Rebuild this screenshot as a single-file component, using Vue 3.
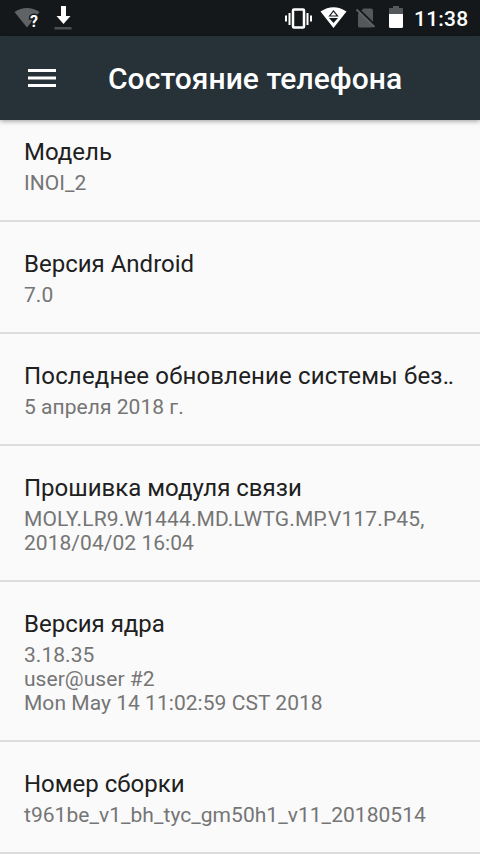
<script setup>
const items = [
  { title: 'Модель', lines: [['INOI_2']] },
  { title: 'Версия Android', lines: [['7.0']] },
  { title: 'Последнее обновление системы без', dots: '..', lines: [['5 апреля 2018 г.']] },
  { title: 'Прошивка модуля связи', lines: [['MOLY.LR9.W1444.MD.LWTG.M', 'P', '.V117.P45,'], ['2018/04/02 16:04']] },
  { title: 'Версия ядра', lines: [['3.18.35'], ['user@user #2'], ['Mon May 14 11:02:59 CST 2018']] },
  { title: 'Номер сборки', lines: [['t961be_v1_bh_tyc_gm50h1_v11_20180514']] },
]
</script>

<template>
  <div class="screen">
    <header class="status">
      <svg class="left" width="80" height="36" viewBox="0 0 80 36">
        <path d="M14.500 12Q27 4 39.500 12L27 27.500Z" fill="#606365" />
        <text x="30" y="27" class="q">?</text>
        <path d="M61 6h5v10h4.500l-7 8-7-8H61z" fill="#fff" />
        <path d="M54.500 27h17v2.500h-17z" fill="#4b4f51" />
      </svg>
      <svg class="right" width="130" height="36" viewBox="280 0 130 36">
        <g fill="none" stroke="#fff" stroke-width="2">
          <rect x="293" y="9.500" width="11" height="18" rx="1" stroke-width="2.500" />
          <path d="M286 15.500v6M289.500 13v12M307.500 13v12M311 15.500v6" />
        </g>
        <path d="M320.500 11.500Q333.500 3 346.500 11.500L333.500 28Z" fill="#fff" />
        <path d="M329.500 16l4-5 4 5z" fill="#fff" stroke="#14181a" stroke-width="1.200" />
        <path d="M329 18h9l-4.500 5z" fill="#14181a" />
        <path d="M363.500 8.500H371q2 0 2 2V26q0 1.500-1.500 1.500h-12q-1.500 0-1.500-1.500V14z" fill="#54585a" />
        <path d="M358 9l18 17.500" stroke="#14181a" stroke-width="2.500" />
        <path d="M356.500 9.500l18 17.500" stroke="#606365" stroke-width="1.800" />
        <path d="M389 14V9q0-1 1-1h3V6h6v2h3q1 0 1 1v5z" fill="#54585a" />
        <path d="M389 14h14v12.500q0 1.500-1.500 1.500h-11q-1.500 0-1.500-1.500z" fill="#fff" />
      </svg>
      <span class="time">11:38</span>
    </header>
    <div class="toolbar">
      <svg width="28" height="20" viewBox="0 0 28 20"><path d="M0 2.500h28M0 10h28M0 17.500h28" stroke="#fff" stroke-width="3" /></svg>
      <h1>Состояние телефона</h1>
    </div>
    <main>
      <section v-for="item in items" :key="item.title">
        <h2 :class="{ wide: item.dots }">{{ item.title }}<span v-if="item.dots" class="dots">{{ item.dots }}</span></h2>
        <p v-for="(line, i) in item.lines" :key="i" :class="{ version: line.length > 1 }"><span v-for="part in line" :key="part" :class="{ kern: part === 'P' }">{{ part }}</span></p>
      </section>
    </main>
  </div>
</template>

<style>
body { margin: 0; }
</style>
<style scoped>
.screen { width: 480px; height: 854px; overflow: hidden; background: #fafafa; font-family: Roboto, sans-serif; display: flex; flex-direction: column; }
.status { height: 36px; flex: none; background: #14181a; display: flex; justify-content: space-between; }
.right { margin-left: auto; }
.q { font-size: 16px; font-weight: 700; fill: #fff; stroke: #14181a; stroke-width: 3px; paint-order: stroke; }
.time { color: #fff; font-size: 21px; font-weight: 500; line-height: 38px; width: 70px; padding-left: 4px; box-sizing: border-box; white-space: nowrap; letter-spacing: 0.2px; }
.toolbar { height: 84px; flex: none; background: #263238; display: flex; align-items: center; padding-left: 28px; box-sizing: border-box; box-shadow: 0 1px 5px #0006; position: relative; }
h1 { margin: 0 0 0 52px; font-size: 30px; font-weight: 500; color: #fff; white-space: nowrap; letter-spacing: 0.04px; }
section { padding: 26px 24px 25px; border-bottom: 2px solid #dcdcdc; }
section:first-child { padding-top: 16px; }
h2 { margin: 0 0 3px; font-size: 24px; line-height: 32px; font-weight: 400; color: #202020; white-space: nowrap; }
h2.wide { letter-spacing: 0.16px; }
.dots { letter-spacing: -1.2px; }
p { margin: 0; font-size: 21px; line-height: 24px; color: #757575; white-space: nowrap; letter-spacing: 0.04px; }
.version { letter-spacing: 0.13px; }
.kern { letter-spacing: -4.3px; }
</style>
